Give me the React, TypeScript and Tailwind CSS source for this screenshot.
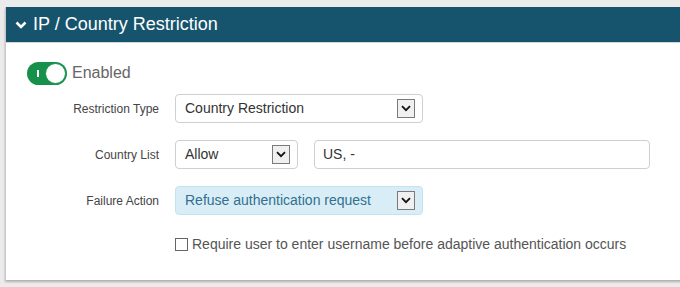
import React from "react";

function DropArrow() {
  return (
    <span className="flex h-[19px] w-[18px] items-center justify-center border border-[#7a7a7a] bg-[#f0f0f0]">
      <svg width="10" height="7" viewBox="0 0 10 7">
        <path d="M1 1.2 L5 5.2 L9 1.2" fill="none" stroke="#111" strokeWidth="1.8" />
      </svg>
    </span>
  );
}

function Select({ value, width, tone = "plain" }: { value: string; width: string; tone?: "plain" | "info" }) {
  const look =
    tone === "info"
      ? "bg-[#d9edf7] border-[#c4e3f0] text-[#31708f]"
      : "bg-white border-[#cfcfcf] text-[#333]";
  return (
    <div className={`flex h-[29px] ${width} items-center justify-between rounded-[4px] border pl-[9px] pr-[7px] text-[14px] ${look}`}>
      <span>{value}</span>
      <DropArrow />
    </div>
  );
}

function Row({ label, children }: { label: string; children: React.ReactNode }) {
  return (
    <div className="flex items-center">
      <div className="w-[153px] text-right text-[12px] text-[#444]">{label}</div>
      <div className="ml-[16px] flex items-center gap-[16px]">{children}</div>
    </div>
  );
}

export default function App() {
  return (
    <div
      className="h-[287px] w-[680px] overflow-hidden bg-[#ebebeb] pl-[5px] pt-[7px]"
      style={{ fontFamily: '"Liberation Sans", Arial, sans-serif' }}
    >
      <div className="w-[690px] border-l border-[#c8c8c8] bg-white shadow-[0_2px_2px_rgba(0,0,0,0.25)]">
        <div className="flex h-[36px] items-center gap-[6px] border-b border-[#d6d6d6] bg-[#16546e] pl-[9px] text-[18px] text-white">
          <svg width="12" height="8" viewBox="0 0 12 8">
            <path d="M1.5 1.5 L6 6 L10.5 1.5" fill="none" stroke="#fff" strokeWidth="2.6" />
          </svg>
          <span>IP / Country Restriction</span>
        </div>

        <div className="flex flex-col pb-[25px] pt-[18px]">
          <div className="flex items-center pl-[21px]">
            <div className="relative h-[23px] w-[40px] rounded-full bg-[#15914b]">
              <span className="absolute left-[10px] top-[8px] h-[7px] w-[2px] bg-white" />
              <span className="absolute right-[1px] top-[1px] h-[21px] w-[21px] rounded-full border border-[#15914b] bg-white" />
            </div>
            <span className="ml-[5px] text-[16px] text-[#666]">Enabled</span>
          </div>

          <div className="mt-[9px] flex flex-col gap-[17px]">
            <Row label="Restriction Type">
              <Select value="Country Restriction" width="w-[248px]" />
            </Row>
            <Row label="Country List">
              <Select value="Allow" width="w-[123px]" />
              <div className="flex h-[29px] w-[336px] items-center rounded-[4px] border border-[#cfcfcf] bg-white pl-[8px] text-[14px] text-[#333]">
                US, -
              </div>
            </Row>
            <Row label="Failure Action">
              <Select value="Refuse authentication request" width="w-[248px]" tone="info" />
            </Row>
          </div>

          <label className="ml-[169px] mt-[19px] flex items-center gap-[4px] text-[14px] text-[#555]">
            <span className="h-[13px] w-[13px] border border-[#666] bg-white" />
            <span>Require user to enter username before adaptive authentication occurs</span>
          </label>
        </div>
      </div>
    </div>
  );
}
